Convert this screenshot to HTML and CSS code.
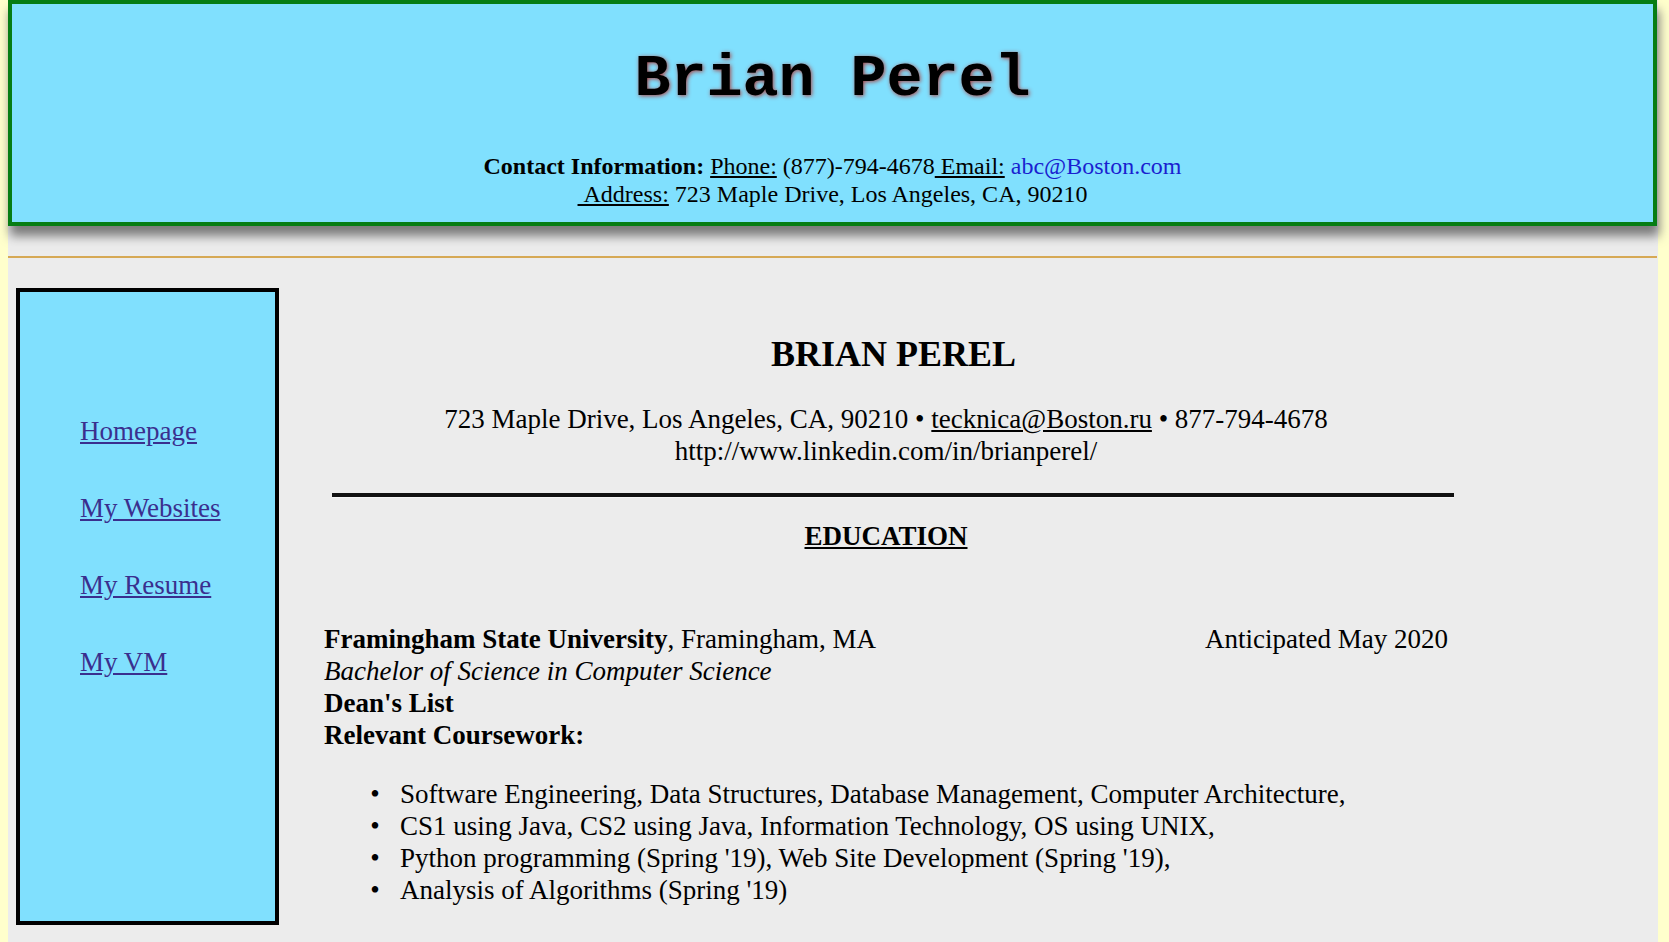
FILE: index.html
```html
<!DOCTYPE html>
<html lang="en">
<head>
<meta charset="utf-8">
<title>Brian Perel</title>
<link rel="stylesheet" href="styles.css">
</head>
<body>
<div class="page">
  <header class="banner">
    <h1 class="banner-title">Brian Perel</h1>
    <p class="banner-contact"><b>Contact Information:</b> <u>Phone:</u> (877)-794-4678<u> Email:</u> <a class="mail" href="#">abc@Boston.com</a><br><u>&nbsp;Address:</u> 723 Maple Drive, Los Angeles, CA, 90210</p>
  </header>
  <hr class="rule">
  <div class="layout">
    <nav class="sidebar">
      <ul class="nav-list">
        <li><a href="#">Homepage</a></li>
        <li><a href="#">My Websites</a></li>
        <li><a href="#">My Resume</a></li>
        <li><a href="#">My VM</a></li>
      </ul>
    </nav>
    <main class="resume">
      <h2 class="resume-name">BRIAN PEREL</h2>
      <p class="resume-contact">723 Maple Drive, Los Angeles, CA, 90210 • <u>tecknica@Boston.ru</u> • 877-794-4678<br>http://www.linkedin.com/in/brianperel/</p>
      <hr class="divider">
      <h3 class="section-title">EDUCATION</h3>
      <div class="edu">
        <div class="edu-row"><span><b>Framingham State University</b>, Framingham, MA</span><span>Anticipated May 2020</span></div>
        <div><i>Bachelor of Science in Computer Science</i></div>
        <div><b>Dean's List</b></div>
        <div><b>Relevant Coursework:</b></div>
        <ul class="courses">
          <li>Software Engineering, Data Structures, Database Management, Computer Architecture,</li>
          <li>CS1 using Java, CS2 using Java, Information Technology, OS using UNIX,</li>
          <li>Python programming (Spring '19), Web Site Development (Spring '19),</li>
          <li>Analysis of Algorithms (Spring '19)</li>
        </ul>
      </div>
    </main>
  </div>
</div>
</body>
</html>
```

FILE: styles.css
```css
html, body {
  margin: 0;
  padding: 0;
}

body {
  background: #ffffcc;
  font-family: "Liberation Serif", "Times New Roman", serif;
  color: #000;
}

.page {
  margin: 0 11px 0 8px;
  background: #ececec;
  min-height: 942px;
}

.banner {
  margin: 0 1px 0 0;
  background: #80e0fe;
  border: 4px solid #067d14;
  box-shadow: 2px 10px 10px #7a7a7a;
  text-align: center;
}

.banner-title {
  margin: 41px 0 40px;
  font-family: "Liberation Mono", "Courier New", monospace;
  font-size: 60px;
  font-weight: bold;
  line-height: 68px;
  color: #000;
  text-shadow: 1px 1px 4px rgba(170, 60, 60, 0.95);
}

.banner-contact {
  margin: 0 0 14px;
  font-size: 24px;
  line-height: 27.6px;
}

.mail {
  color: #1a1fd0;
  text-decoration: none;
}

.rule {
  margin: 30px 1px 0 0;
  height: 0;
  border: 0;
  border-top: 2px solid #d6a955;
}

.layout {
  display: flex;
  align-items: flex-start;
  gap: 45px;
  padding-left: 8px;
  margin-top: 30px;
}

.sidebar {
  box-sizing: border-box;
  flex: 0 0 263px;
  height: 637px;
  background: #80e0fe;
  border: 4px solid #000;
  padding: 124px 0 0 60px;
}

.nav-list {
  list-style: none;
  margin: 0;
  padding: 0;
  font-size: 27px;
  line-height: 30px;
}

.nav-list li + li {
  margin-top: 47px;
}

.nav-list a {
  color: #3a2f8e;
  text-decoration: underline;
}

.resume {
  flex: 0 0 1124px;
  min-width: 0;
  font-size: 27px;
  line-height: 32px;
}

.resume-name {
  margin: 46px 0 0;
  padding-left: 15px;
  font-size: 36px;
  line-height: 40px;
  font-weight: bold;
  text-align: center;
}

.resume-contact {
  margin: 29px 0 0;
  text-align: center;
}

.divider {
  margin: 26px 0 0 8px;
  width: 1122px;
  height: 0;
  border: 0;
  border-top: 4px solid #111;
  border-bottom: 1px solid #f6f6f6;
}

.section-title {
  margin: 22px 0 0;
  font-size: 27px;
  line-height: 32px;
  font-weight: bold;
  text-align: center;
  text-decoration: underline;
}

.edu {
  margin-top: 71px;
}

.edu-row {
  display: flex;
  justify-content: space-between;
}

.courses {
  margin: 27px 0 0;
  padding-left: 76px;
}

.courses li::marker {
  content: "•\00a0\00a0\00a0";
}
```
